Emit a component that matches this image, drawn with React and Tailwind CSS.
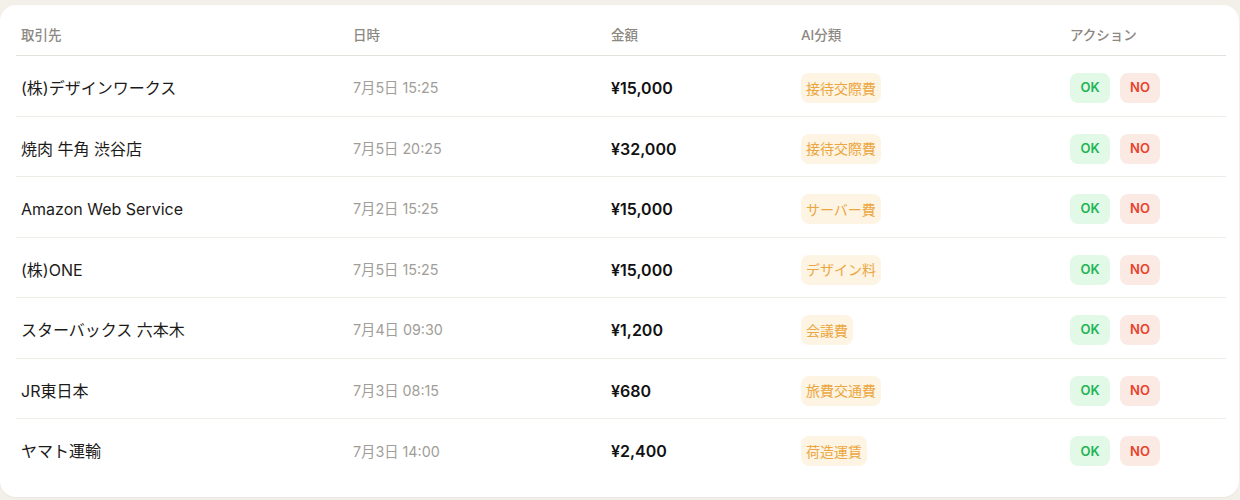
import React from 'react';

const rows = [
  { name: '(株)デザインワークス', date: '7月5日 15:25', amount: '¥15,000', tag: '接待交際費' },
  { name: '焼肉 牛角 渋谷店', date: '7月5日 20:25', amount: '¥32,000', tag: '接待交際費' },
  { name: 'Amazon Web Service', date: '7月2日 15:25', amount: '¥15,000', tag: 'サーバー費' },
  { name: '(株)ONE', date: '7月5日 15:25', amount: '¥15,000', tag: 'デザイン料' },
  { name: 'スターバックス 六本木', date: '7月4日 09:30', amount: '¥1,200', tag: '会議費' },
  { name: 'JR東日本', date: '7月3日 08:15', amount: '¥680', tag: '旅費交通費' },
  { name: 'ヤマト運輸', date: '7月3日 14:00', amount: '¥2,400', tag: '荷造運賃' },
];

export default function App() {
  return (
    <div className="min-h-[500px] bg-[#f3f0ea] pt-[5px] pr-[1px] font-['Inter','Noto_Sans_CJK_JP',sans-serif]">
      <div className="bg-white rounded-2xl pl-4 pr-[13px] pt-[6px] pb-[18px] shadow-[0_1px_2px_rgba(0,0,0,0.04)]">
        <table className="w-full table-fixed border-collapse">
          <thead>
            <tr className="border-b border-[#e4e1dc] text-left text-[13.5px] font-medium text-[#8c8882]">
              <th className="w-[332px] px-[5px] pt-[14px] pb-[10px] font-medium">取引先</th>
              <th className="w-[258px] px-[5px] pt-[14px] pb-[10px] font-medium">日時</th>
              <th className="w-[190px] px-[5px] pt-[14px] pb-[10px] font-medium">金額</th>
              <th className="w-[269px] px-[5px] pt-[14px] pb-[10px] font-medium">AI分類</th>
              <th className="px-[5px] pt-[14px] pb-[10px] font-medium">アクション</th>
            </tr>
          </thead>
          <tbody>
            {rows.map((r, i) => (
              <tr key={i} className={`h-[60.5px] ${i < rows.length - 1 ? 'border-b border-[#efece7]' : ''}`}>
                <td className="px-[5px] pt-[4px] text-[16px] text-[#1c1b1a]">{r.name}</td>
                <td className="px-[5px] pt-[4px] text-[14.3px] text-[#a19d98]">{r.date}</td>
                <td className="px-[5px] pt-[4px] text-[16px] font-semibold text-[#111]">{r.amount}</td>
                <td className="px-[5px] pt-[4px]">
                  <span className="inline-flex h-[30px] items-center rounded-lg bg-[#fdf4e3] px-[5px] text-[14px] text-[#eca63f]">
                    {r.tag}
                  </span>
                </td>
                <td className="px-[5px] pt-[4px]">
                  <div className="flex gap-[10px]">
                    <button className="h-[30px] w-10 rounded-lg bg-[#e2f9e7] text-[13px] font-semibold text-[#22b455]">OK</button>
                    <button className="h-[30px] w-10 rounded-lg bg-[#fbe9e3] text-[13px] font-semibold text-[#e8432b]">NO</button>
                  </div>
                </td>
              </tr>
            ))}
          </tbody>
        </table>
      </div>
    </div>
  );
}
